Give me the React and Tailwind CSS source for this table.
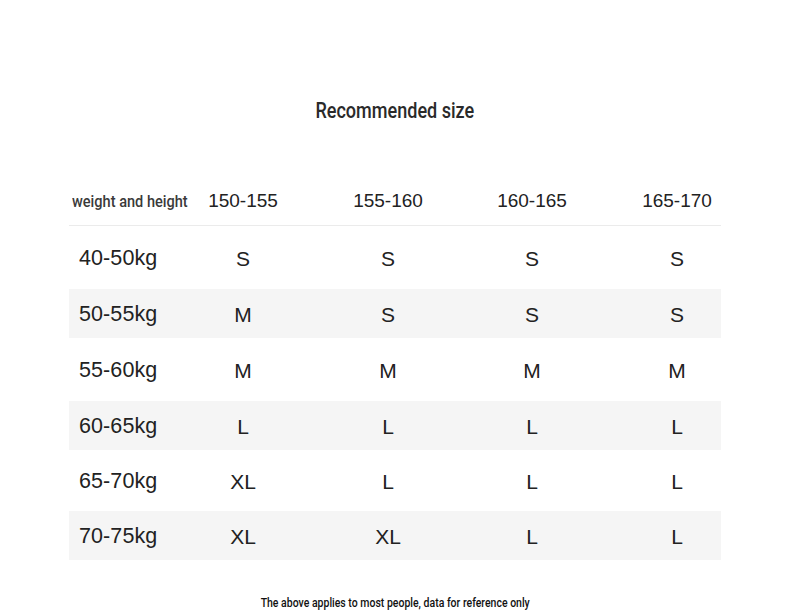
const heights = ['150-155', '155-160', '160-165', '165-170'];

const rows = [
  { label: '40-50kg', sizes: ['S', 'S', 'S', 'S'], h: 'h-[63px]', shade: false },
  { label: '50-55kg', sizes: ['M', 'S', 'S', 'S'], h: 'h-[49px]', shade: true },
  { label: '55-60kg', sizes: ['M', 'M', 'M', 'M'], h: 'h-[63px]', shade: false },
  { label: '60-65kg', sizes: ['L', 'L', 'L', 'L'], h: 'h-[49px]', shade: true },
  { label: '65-70kg', sizes: ['XL', 'L', 'L', 'L'], h: 'h-[61px]', shade: false },
  { label: '70-75kg', sizes: ['XL', 'XL', 'L', 'L'], h: 'h-[49px]', shade: true },
];

const cols = 'grid grid-cols-[101px_146px_144px_144px_117px]';

export default function App() {
  return (
    <div className="w-[790px] h-[616px] bg-white text-[#222] font-['Liberation_Sans',Arial,sans-serif] overflow-hidden">
      <div className="pt-[98px] flex justify-center">
        <h1 className="inline-block scale-x-[0.82] origin-center text-[22px] leading-[26px] font-medium text-[#2a2a2a] font-['Roboto',sans-serif]">
          Recommended size
        </h1>
      </div>

      <div className="w-[652px] mx-auto mt-[52px]">
        <div className={`${cols} h-[50px] pt-[2px] items-center border-b border-[#ebebeb]`}>
          <div className="pl-[3px] whitespace-nowrap">
            <span className="inline-block origin-left scale-x-[0.91] text-[16px] font-medium text-[#3a3a3a] font-['Roboto',sans-serif]">
              weight and height
            </span>
          </div>
          {heights.map((h, i) => (
            <div key={h} className={`text-center text-[19px] ${i === 3 ? 'pl-[29px]' : ''}`}>
              {h}
            </div>
          ))}
        </div>

        {rows.map((r) => (
          <div
            key={r.label}
            className={`${cols} ${r.h} pt-[2px] items-center ${r.shade ? 'bg-[#f5f5f5]' : ''}`}
          >
            <div className="pl-[10px] text-[21.5px] tracking-[0.1px]">{r.label}</div>
            {r.sizes.map((s, i) => (
              <div key={i} className={`text-center text-[21px] ${i === 3 ? 'pl-[29px]' : ''}`}>
                {s}
              </div>
            ))}
          </div>
        ))}
      </div>

      <div className="mt-[34px] flex justify-center">
        <p className="inline-block scale-x-[0.84] whitespace-nowrap text-[12.5px] font-medium text-[#111] font-['Roboto',sans-serif]">
          The above applies to most people, data for reference only
        </p>
      </div>
    </div>
  );
}
